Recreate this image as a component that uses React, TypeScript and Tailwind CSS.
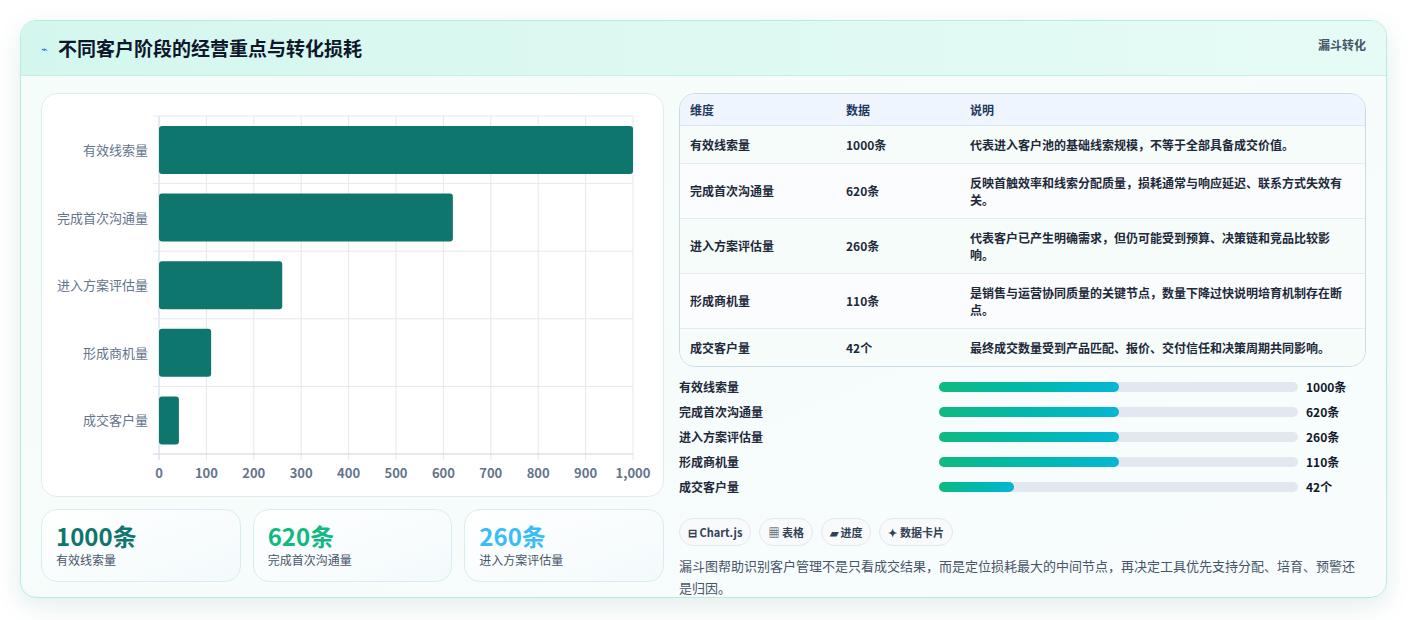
const rows = [
  { name: "有效线索量", v: 1000, d: "1000条", desc: "代表进入客户池的基础线索规模，不等于全部具备成交价值。", p: 50 },
  { name: "完成首次沟通量", v: 620, d: "620条", desc: "反映首触效率和线索分配质量，损耗通常与响应延迟、联系方式失效有关。", p: 50 },
  { name: "进入方案评估量", v: 260, d: "260条", desc: "代表客户已产生明确需求，但仍可能受到预算、决策链和竞品比较影响。", p: 50 },
  { name: "形成商机量", v: 110, d: "110条", desc: "是销售与运营协同质量的关键节点，数量下降过快说明培育机制存在断点。", p: 50 },
  { name: "成交客户量", v: 42, d: "42个", desc: "最终成交数量受到产品匹配、报价、交付信任和决策周期共同影响。", p: 21 },
];

const font = { fontFamily: '"Noto Sans CJK SC", "Noto Sans", sans-serif' };

const Chart = () => {
  const x0 = 117, x1 = 591, top = 22, h = 338;
  const rh = h / 5;
  return (
    <svg width="622" height="402" className="block">
      {Array.from({ length: 11 }).map((_, i) => {
        const x = x0 + ((x1 - x0) * i) / 10;
        return (
          <g key={i}>
            <line x1={x} x2={x} y1={top} y2={top + h + 6} stroke={i === 0 ? "#cbd5e1" : "#e5e7eb"} />
            <text x={x} y={top + h + 24} textAnchor="middle" fontSize="13" fontWeight="600" fill="#64748b">
              {i === 10 ? "1,000" : i * 100}
            </text>
          </g>
        );
      })}
      {Array.from({ length: 6 }).map((_, i) => (
        <line key={i} x1={x0 - 6} x2={x1} y1={top + rh * i} y2={top + rh * i} stroke={i === 5 ? "#cbd5e1" : "#e5e7eb"} />
      ))}
      {rows.map((r, i) => {
        const y = top + rh * i;
        return (
          <g key={r.name}>
            <rect x={x0} y={y + 10} width={((x1 - x0) * r.v) / 1000} height={48} rx="3" fill="#0f766e" />
            <text x={x0 - 11} y={y + 39} textAnchor="end" fontSize="13" fill="#64748b">{r.name}</text>
          </g>
        );
      })}
    </svg>
  );
};

export default function App() {
  return (
    <div className="w-[1408px] h-[620px] bg-white pt-5 px-5" style={font}>
      <div className="w-[1367px] h-[578px] rounded-2xl border border-[#b9ecdf] bg-gradient-to-br from-[#f4fdf9] to-[#f8fcfd] shadow-[0_8px_24px_rgba(15,118,110,0.12)] overflow-hidden">
        <div className="h-[55px] flex items-center justify-between px-5 bg-gradient-to-r from-[#d3f7ee] to-[#e7fbf6] border-b border-[#c9efe4]">
          <div className="flex items-center gap-2.5">
            <span className="text-[11px] text-[#2563eb]">⌁</span>
            <span className="text-[19px] font-bold text-[#0f172a]">不同客户阶段的经营重点与转化损耗</span>
          </div>
          <span className="text-xs font-bold text-[#475569] self-start mt-4">漏斗转化</span>
        </div>
        <div className="flex gap-[15px] px-5 pt-[17px]">
          <div className="w-[623px] flex flex-col gap-3">
            <div className="h-[404px] rounded-2xl border border-[#dfeee9] bg-white">
              <Chart />
            </div>
            <div className="flex gap-3">
              {[
                ["1000条", "有效线索量", "text-[#0f766e]"],
                ["620条", "完成首次沟通量", "text-[#10b981]"],
                ["260条", "进入方案评估量", "text-[#38bdf8]"],
              ].map(([v, l, c]) => (
                <div key={l} className="flex-1 h-[73px] rounded-2xl border border-[#d6eef0] bg-gradient-to-br from-white to-[#f3fafc] px-3.5 pt-2.5">
                  <div className={`text-[24px] font-bold leading-8 ${c}`}>{v}</div>
                  <div className="text-xs text-[#475569]">{l}</div>
                </div>
              ))}
            </div>
          </div>
          <div className="w-[690px] flex flex-col">
            <div className="rounded-2xl border border-[#c8dce6] overflow-hidden text-xs text-[#1e293b] bg-white">
              <div className="flex h-8 items-center bg-[#eef5fe] font-bold text-[#1e3a5f] border-b border-[#dbe7f0]">
                <div className="w-[166px] pl-2.5">维度</div>
                <div className="w-[124px]">数据</div>
                <div className="flex-1">说明</div>
              </div>
              {rows.map((r, i) => (
                <div key={r.name} className={`flex items-center py-2.5 min-h-[35px] font-semibold ${i < 4 ? "border-b border-[#e5edf2]" : ""} ${i % 2 === 0 ? "bg-[#f5fcf9]" : "bg-[#fafcfd]"}`}>
                  <div className="w-[166px] pl-2.5">{r.name}</div>
                  <div className="w-[124px]">{r.d}</div>
                  <div className="flex-1 pr-4 leading-[17px]">{r.desc}</div>
                </div>
              ))}
            </div>
            <div className="flex flex-col gap-[7px] mt-[11px]">
              {rows.map((r) => (
                <div key={r.name} className="flex items-center h-[18px] text-xs font-semibold text-[#1e293b]">
                  <div className="w-[260px]">{r.name}</div>
                  <div className="w-[359px] h-[10px] rounded-full bg-[#e2e8f0]">
                    <div className="h-full rounded-full bg-gradient-to-r from-[#10b981] to-[#06b6d4]" style={{ width: `${r.p}%` }} />
                  </div>
                  <div className="ml-2 font-bold text-[#0f172a]">{r.d}</div>
                </div>
              ))}
            </div>
            <div className="flex gap-2 mt-[22px] text-[11px] font-semibold text-[#334155]">
              {["⊟ Chart.js", "▦ 表格", "▰ 进度", "✦ 数据卡片"].map((t) => (
                <span key={t} className="h-7 px-2 flex items-center rounded-full border border-[#e2e8f0] bg-[#f8fafc]">{t}</span>
              ))}
            </div>
            <p className="mt-[9px] text-[13px] leading-[22px] text-[#475569]">
              漏斗图帮助识别客户管理不是只看成交结果，而是定位损耗最大的中间节点，再决定工具优先支持分配、培育、预警还是归因。
            </p>
          </div>
        </div>
      </div>
    </div>
  );
}
